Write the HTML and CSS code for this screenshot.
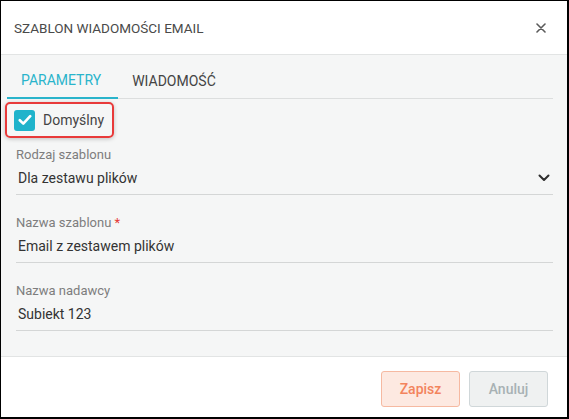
FILE: index.html
```html
<!DOCTYPE html>
<html lang="pl">
<head>
<meta charset="utf-8">
<title>Szablon wiadomości email</title>
<link rel="stylesheet" href="styles.css">
</head>
<body>
<div class="dialog">
  <header class="dlg-header">
    <h1 class="dlg-title">SZABLON WIADOMOŚCI EMAIL</h1>
    <button class="close-btn" aria-label="Zamknij">
      <svg width="10" height="10" viewBox="0 0 10 10"><path d="M1 1L9 9M9 1L1 9" stroke="#5a5a5a" stroke-width="1.6" stroke-linecap="round"/></svg>
    </button>
  </header>
  <main class="dlg-body">
    <nav class="tabs">
      <div class="tab active">PARAMETRY</div>
      <div class="tab">WIADOMOŚĆ</div>
    </nav>
    <div class="check-row">
      <span class="checkbox">
        <svg width="14" height="12" viewBox="0 0 14 12"><path d="M1.8 6.2L5.3 9.6L12.2 2.2" fill="none" stroke="#fff" stroke-width="2.6" stroke-linecap="round" stroke-linejoin="round"/></svg>
      </span>
      <span class="check-label">Domyślny</span>
    </div>
    <div class="field">
      <div class="field-label">Rodzaj szablonu</div>
      <div class="field-value select">
        <span>Dla zestawu plików</span>
        <svg class="chevron" width="12" height="8" viewBox="0 0 12 8"><path d="M1.5 1.5L6 6L10.5 1.5" fill="none" stroke="#2e2e2e" stroke-width="2" stroke-linecap="round" stroke-linejoin="round"/></svg>
      </div>
    </div>
    <div class="field">
      <div class="field-label">Nazwa szablonu <span class="req">*</span></div>
      <div class="field-value">Email z zestawem plików</div>
    </div>
    <div class="field">
      <div class="field-label">Nazwa nadawcy</div>
      <div class="field-value">Subiekt 123</div>
    </div>
  </main>
  <footer class="dlg-footer">
    <button class="btn btn-save">Zapisz</button>
    <button class="btn btn-cancel">Anuluj</button>
  </footer>
</div>
</body>
</html>
```

FILE: styles.css
```css
* { box-sizing: border-box; }
html, body { margin: 0; padding: 0; }
body {
  width: 569px;
  height: 419px;
  font-family: Roboto, "Liberation Sans", sans-serif;
  background: #fff;
  overflow: hidden;
}
.dialog {
  width: 569px;
  height: 419px;
  border-style: solid;
  border-color: #000;
  border-width: 1px 2px 2px 1px;
  display: flex;
  flex-direction: column;
  background: #fff;
}
.dlg-header {
  height: 54px;
  flex: none;
  display: flex;
  align-items: center;
  justify-content: space-between;
  padding: 0 19px 0 13px;
  border-bottom: 1px solid #e2e4e4;
  background: #fff;
}
.dlg-title {
  margin: 0;
  font-size: 13.5px;
  font-weight: 400;
  color: #4a4a4a;
  letter-spacing: 0;
}
.close-btn {
  border: 0;
  background: none;
  padding: 0;
  width: 14px;
  height: 14px;
  display: flex;
  align-items: center;
  justify-content: center;
}
.dlg-body {
  flex: 1;
  background: #f5f6f6;
  padding: 0 14px 0 15px;
  border-bottom: 1px solid #e2e4e4;
}
.tabs {
  display: flex;
  height: 44px;
  margin-left: -9px;
  border-bottom: 1px solid #dcdede;
}
.tab {
  padding: 8px 17px 0 14px;
  font-size: 14px;
  color: #444;
  display: flex;
  align-items: center;
  margin-bottom: -1px;
}
.tab.active {
  color: #29b4cb;
  border-bottom: 2px solid #29b4cb;
}
.tab + .tab { padding-left: 14px; }
.check-row {
  margin: 3px 0 0 -11px;
  width: 109px;
  height: 36px;
  border: 2px solid #e83a3a;
  border-radius: 5px;
  box-shadow: 0 1px 4px rgba(0,0,0,0.22);
  display: flex;
  align-items: center;
  padding-left: 7px;
  gap: 8px;
}
.checkbox {
  width: 21px;
  height: 21px;
  border-radius: 3px;
  background: #1fb3cb;
  display: flex;
  align-items: center;
  justify-content: center;
}
.check-label {
  font-size: 14px;
  color: #444;
}
.field {
  margin-top: 20px;
  border-bottom: 1px solid #d4d6d6;
}
.check-row + .field { margin-top: 9px; }
.field-label {
  font-size: 13px;
  line-height: 16px;
  color: #7d7d7d;
}
.req { color: #e53935; }
.field-value {
  font-size: 14px;
  line-height: 20px;
  color: #333;
  padding: 5px 0 6px 2px;
}
.select {
  display: flex;
  align-items: center;
  justify-content: space-between;
  padding-right: 3px;
}
.dlg-footer {
  height: 60px;
  flex: none;
  background: #fff;
  display: flex;
  justify-content: flex-end;
  align-items: flex-start;
  gap: 9px;
  padding: 14px 19px 0 0;
}
.btn {
  width: 79px;
  height: 36px;
  border-radius: 3px;
  font-family: Roboto, "Liberation Sans", sans-serif;
  font-size: 14px;
  font-weight: 500;
  border: 1px solid;
}
.btn-save {
  background: #fde9e1;
  border-color: #f6b9a1;
  color: #f3845d;
}
.btn-cancel {
  background: #eff1f1;
  border-color: #d0d7d9;
  color: #a8b1b4;
}
```
